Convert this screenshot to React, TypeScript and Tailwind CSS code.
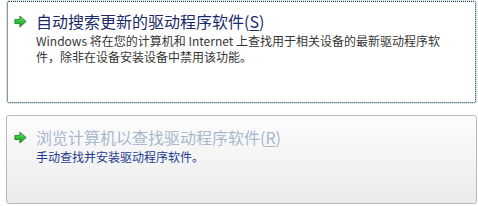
import React from 'react'

function GreenArrow() {
  return (
    <svg width="13" height="13" viewBox="0 0 12 12" className="shrink-0">
      <defs>
        <linearGradient id="ga" x1="0" y1="0" x2="0" y2="1">
          <stop offset="0" stopColor="#8ae686" />
          <stop offset="0.5" stopColor="#30c038" />
          <stop offset="1" stopColor="#179b23" />
        </linearGradient>
      </defs>
      <path
        d="M0.8 4.1 H5.4 V1 L11.2 6 L5.4 11 V7.9 H0.8 Z"
        fill="url(#ga)"
        stroke="#217f27"
        strokeWidth="0.8"
        strokeLinejoin="round"
      />
    </svg>
  )
}

const FONT = "font-['Microsoft_YaHei','Noto_Sans_CJK_SC',sans-serif]"

export default function App() {
  return (
    <div className={`w-[478px] h-[206px] bg-white ${FONT}`}>
      {/* Option 1: focused */}
      <div className="ml-[6px] w-[471px] h-[104px] border border-[#cfe9f3] rounded-[3px]">
        <div className="h-full border border-dotted border-[#2a2a2a] rounded-[2px] flex items-start gap-[9px] pl-[6px] pt-[7px]">
          <div className="h-[24px] flex items-center">
            <GreenArrow />
          </div>
          <div className="flex flex-col">
            <div className="text-[16px] leading-[24px] text-[#1b2a6b] whitespace-nowrap">
              自动搜索更新的驱动程序软件(<span className="underline underline-offset-2">S</span>)
            </div>
            <p className="w-[420px] text-[12px] leading-[16px] text-[#363636]">
              Windows 将在您的计算机和 Internet 上查找用于相关设备的最新驱动程序软件，除非在设备安装设备中禁用该功能。
            </p>
          </div>
        </div>
      </div>

      {/* Option 2: hovered */}
      <div className="mt-[11px] ml-[6px] w-[471px] h-[89px] border border-[#b9b9b9] rounded-[3px] bg-gradient-to-b from-[#fdfdfd] to-[#ebebeb] flex items-start gap-[9px] pl-[7px] pt-[9px]">
        <div className="h-[24px] flex items-center">
          <GreenArrow />
        </div>
        <div className="flex flex-col">
          <div className="text-[16px] leading-[24px] text-[#a8b8cf] whitespace-nowrap">
            浏览计算机以查找驱动程序软件(<span className="underline underline-offset-2">R</span>)
          </div>
          <p className="text-[12px] leading-[16px] text-[#1c3c8e]">
            手动查找并安装驱动程序软件。
          </p>
        </div>
      </div>
    </div>
  )
}
